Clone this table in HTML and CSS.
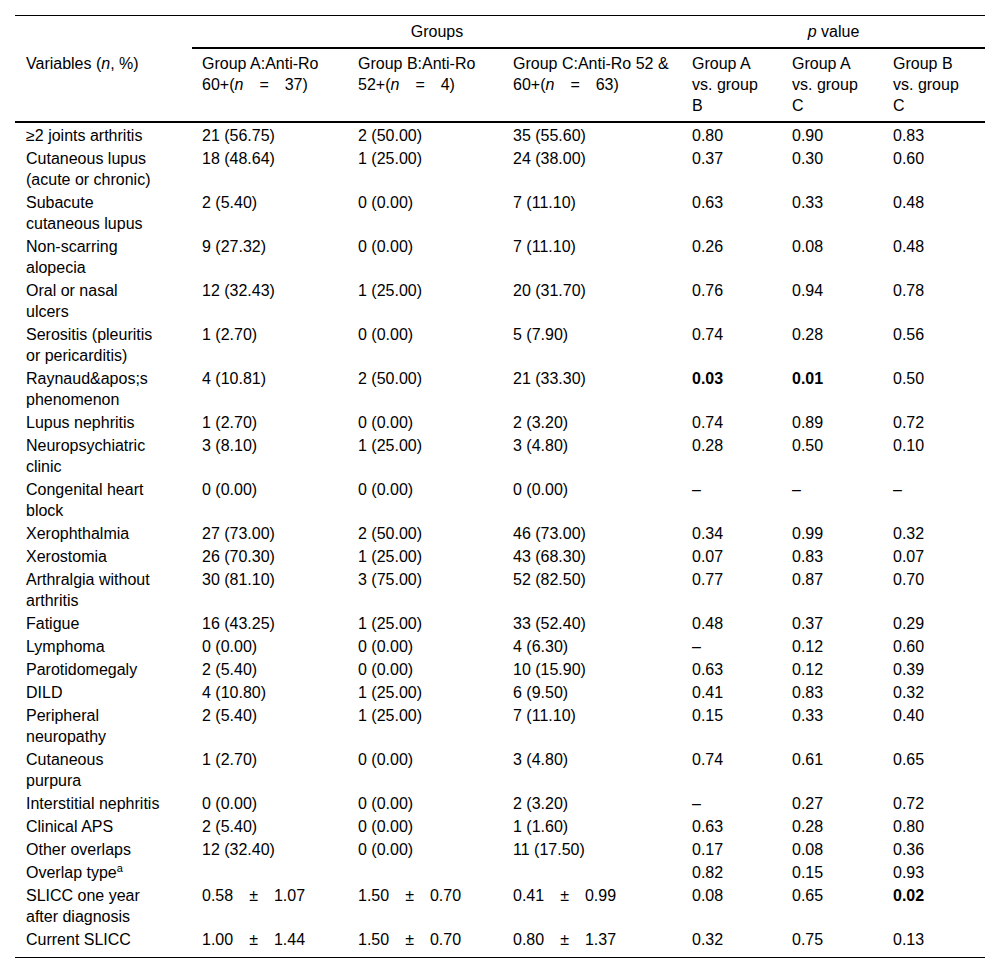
FILE: index.html
```html
<!DOCTYPE html>
<html>
<head>
<meta charset="utf-8">
<link rel="stylesheet" href="styles.css">
</head>
<body>
<table class="tbl">
  <colgroup>
    <col class="c-var">
    <col class="c-a">
    <col class="c-b">
    <col class="c-c">
    <col class="c-p1">
    <col class="c-p2">
    <col class="c-p3">
  </colgroup>
  <thead>
    <tr class="h1">
      <th class="first"></th>
      <th colspan="3" class="span">Groups</th>
      <th colspan="3" class="span"><i>p</i> value</th>
    </tr>
    <tr class="h2">
      <th class="first">Variables (<i>n</i>, %)</th>
      <th>Group A:Anti-Ro <span class="nw">60+(<i>n</i>&emsp;=&emsp;37)</span></th>
      <th>Group B:Anti-Ro <span class="nw">52+(<i>n</i>&emsp;=&emsp;4)</span></th>
      <th>Group C:Anti-Ro 52 &amp; <span class="nw">60+(<i>n</i>&emsp;=&emsp;63)</span></th>
      <th class="p">Group A vs. group B</th>
      <th class="p">Group A vs. group C</th>
      <th class="p">Group B vs. group C</th>
    </tr>
  </thead>
  <tbody>
    <tr><td class="first">≥2 joints arthritis</td><td>21 (56.75)</td><td>2 (50.00)</td><td>35 (55.60)</td><td class="p">0.80</td><td class="p">0.90</td><td class="p">0.83</td></tr>
    <tr><td class="first">Cutaneous lupus (acute or chronic)</td><td>18 (48.64)</td><td>1 (25.00)</td><td>24 (38.00)</td><td class="p">0.37</td><td class="p">0.30</td><td class="p">0.60</td></tr>
    <tr><td class="first">Subacute cutaneous lupus</td><td>2 (5.40)</td><td>0 (0.00)</td><td>7 (11.10)</td><td class="p">0.63</td><td class="p">0.33</td><td class="p">0.48</td></tr>
    <tr><td class="first">Non-scarring alopecia</td><td>9 (27.32)</td><td>0 (0.00)</td><td>7 (11.10)</td><td class="p">0.26</td><td class="p">0.08</td><td class="p">0.48</td></tr>
    <tr><td class="first">Oral or nasal ulcers</td><td>12 (32.43)</td><td>1 (25.00)</td><td>20 (31.70)</td><td class="p">0.76</td><td class="p">0.94</td><td class="p">0.78</td></tr>
    <tr><td class="first">Serositis (pleuritis or pericarditis)</td><td>1 (2.70)</td><td>0 (0.00)</td><td>5 (7.90)</td><td class="p">0.74</td><td class="p">0.28</td><td class="p">0.56</td></tr>
    <tr><td class="first">Raynaud&amp;apos;s phenomenon</td><td>4 (10.81)</td><td>2 (50.00)</td><td>21 (33.30)</td><td class="p"><b>0.03</b></td><td class="p"><b>0.01</b></td><td class="p">0.50</td></tr>
    <tr><td class="first">Lupus nephritis</td><td>1 (2.70)</td><td>0 (0.00)</td><td>2 (3.20)</td><td class="p">0.74</td><td class="p">0.89</td><td class="p">0.72</td></tr>
    <tr><td class="first">Neuropsychiatric clinic</td><td>3 (8.10)</td><td>1 (25.00)</td><td>3 (4.80)</td><td class="p">0.28</td><td class="p">0.50</td><td class="p">0.10</td></tr>
    <tr><td class="first">Congenital heart block</td><td>0 (0.00)</td><td>0 (0.00)</td><td>0 (0.00)</td><td class="p">–</td><td class="p">–</td><td class="p">–</td></tr>
    <tr><td class="first">Xerophthalmia</td><td>27 (73.00)</td><td>2 (50.00)</td><td>46 (73.00)</td><td class="p">0.34</td><td class="p">0.99</td><td class="p">0.32</td></tr>
    <tr><td class="first">Xerostomia</td><td>26 (70.30)</td><td>1 (25.00)</td><td>43 (68.30)</td><td class="p">0.07</td><td class="p">0.83</td><td class="p">0.07</td></tr>
    <tr><td class="first">Arthralgia without arthritis</td><td>30 (81.10)</td><td>3 (75.00)</td><td>52 (82.50)</td><td class="p">0.77</td><td class="p">0.87</td><td class="p">0.70</td></tr>
    <tr><td class="first">Fatigue</td><td>16 (43.25)</td><td>1 (25.00)</td><td>33 (52.40)</td><td class="p">0.48</td><td class="p">0.37</td><td class="p">0.29</td></tr>
    <tr><td class="first">Lymphoma</td><td>0 (0.00)</td><td>0 (0.00)</td><td>4 (6.30)</td><td class="p">–</td><td class="p">0.12</td><td class="p">0.60</td></tr>
    <tr><td class="first">Parotidomegaly</td><td>2 (5.40)</td><td>0 (0.00)</td><td>10 (15.90)</td><td class="p">0.63</td><td class="p">0.12</td><td class="p">0.39</td></tr>
    <tr><td class="first">DILD</td><td>4 (10.80)</td><td>1 (25.00)</td><td>6 (9.50)</td><td class="p">0.41</td><td class="p">0.83</td><td class="p">0.32</td></tr>
    <tr><td class="first">Peripheral neuropathy</td><td>2 (5.40)</td><td>1 (25.00)</td><td>7 (11.10)</td><td class="p">0.15</td><td class="p">0.33</td><td class="p">0.40</td></tr>
    <tr><td class="first">Cutaneous purpura</td><td>1 (2.70)</td><td>0 (0.00)</td><td>3 (4.80)</td><td class="p">0.74</td><td class="p">0.61</td><td class="p">0.65</td></tr>
    <tr><td class="first">Interstitial nephritis</td><td>0 (0.00)</td><td>0 (0.00)</td><td>2 (3.20)</td><td class="p">–</td><td class="p">0.27</td><td class="p">0.72</td></tr>
    <tr><td class="first">Clinical APS</td><td>2 (5.40)</td><td>0 (0.00)</td><td>1 (1.60)</td><td class="p">0.63</td><td class="p">0.28</td><td class="p">0.80</td></tr>
    <tr><td class="first">Other overlaps</td><td>12 (32.40)</td><td>0 (0.00)</td><td>11 (17.50)</td><td class="p">0.17</td><td class="p">0.08</td><td class="p">0.36</td></tr>
    <tr><td class="first">Overlap type<sup>a</sup></td><td></td><td></td><td></td><td class="p">0.82</td><td class="p">0.15</td><td class="p">0.93</td></tr>
    <tr><td class="first">SLICC one year after diagnosis</td><td>0.58&emsp;±&emsp;1.07</td><td>1.50&emsp;±&emsp;0.70</td><td>0.41&emsp;±&emsp;0.99</td><td class="p">0.08</td><td class="p">0.65</td><td class="p"><b>0.02</b></td></tr>
    <tr class="last"><td class="first">Current SLICC</td><td>1.00&emsp;±&emsp;1.44</td><td>1.50&emsp;±&emsp;0.70</td><td>0.80&emsp;±&emsp;1.37</td><td class="p">0.32</td><td class="p">0.75</td><td class="p">0.13</td></tr>
  </tbody>
</table>
</body>
</html>
```

FILE: styles.css
```css
html, body {
  margin: 0;
  padding: 0;
  background: #ffffff;
}

body {
  padding: 15px 0 0 15px;
  font-family: "Liberation Sans", Arial, sans-serif;
  font-size: 16px;
  color: #000000;
}

.tbl {
  table-layout: fixed;
  width: 970px;
  border-collapse: separate;
  border-spacing: 0;
  border-top: 1px solid #000;
  border-bottom: 1px solid #000;
  line-height: 21px;
}

.c-var { width: 177px; }
.c-a { width: 156px; }
.c-b { width: 155px; }
.c-c { width: 179px; }
.c-p1 { width: 100px; }
.c-p2 { width: 101px; }
.c-p3 { width: 102px; }

.tbl th,
.tbl td {
  text-align: left;
  vertical-align: top;
  font-weight: normal;
  padding: 2px 10px 0 10px;
}

.tbl .first {
  padding-left: 11px;
  padding-right: 32px;
}

.tbl .p {
  padding-right: 18px;
}

.h1 th {
  padding-top: 5px;
  padding-bottom: 5px;
}

.h1 th.span {
  text-align: center;
  border-bottom: 2px solid #000;
}

.h2 th {
  padding-top: 4px;
  padding-bottom: 5px;
  border-bottom: 2px solid #000;
}

.nw {
  white-space: nowrap;
}

.last td {
  padding-bottom: 7px;
}

sup {
  font-size: 11px;
  line-height: 0;
  vertical-align: 6px;
}

b {
  font-weight: bold;
}
```
